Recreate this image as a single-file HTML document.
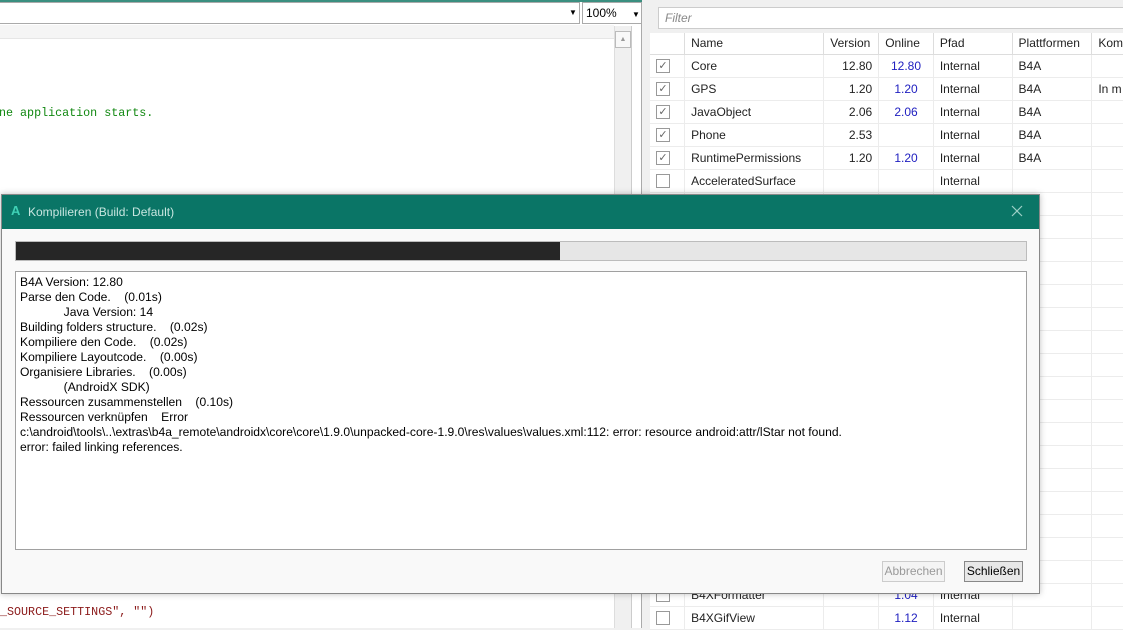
<!DOCTYPE html>
<html><head><meta charset="utf-8"><style>
*{margin:0;padding:0;box-sizing:border-box}
body{width:1123px;height:628px;overflow:hidden;position:relative;background:#f0f0f0;font-family:"Liberation Sans",sans-serif;font-size:12px;color:#000}
.abs{position:absolute}
.ed{left:0;top:0;width:642px;height:628px;background:#fff;border-right:1px solid #aaa}
.mono{font-family:"Liberation Mono",monospace;font-size:11.7px}
table{border-collapse:collapse;position:absolute;left:650px;top:33px;width:480px;background:#fff;font-size:12px}
td{height:23px;border-right:1px solid #ececec;border-bottom:1px solid #ececec;padding:0 6px;white-space:nowrap;color:#222}
th{height:21px;font-weight:normal;text-align:left;padding:0 6px;border-right:1px solid #ddd;border-bottom:1px solid #ddd;background:#fff;color:#222}
.cb{display:inline-block;width:14px;height:14px;border:1px solid #999;vertical-align:middle;text-align:center;line-height:12px;font-size:11px;color:#666}
.r{text-align:right}.b{color:#2020c0;text-align:center}
</style></head><body>
<div class="abs ed">
 <div class="abs" style="left:0;top:0;width:642px;height:2px;background:#3a8f80"></div>
 <div class="abs" style="left:0;top:2px;width:580px;height:22px;border:1px solid #aaa;border-left:none;background:#fff"></div>
 <div class="abs" style="left:569px;top:8px;font-size:8px">▼</div>
 <div class="abs" style="left:582px;top:2px;width:60px;height:22px;border:1px solid #aaa;background:#fff;padding:3px 3px;font-size:12px">100%<span style="position:absolute;left:49px;top:7px;font-size:8px">▼</span></div>
 <div class="abs" style="left:0;top:25px;width:614px;height:14px;background:#f5f5f5;border-bottom:1px solid #e6e6e6"></div>
 <div class="abs" style="left:614px;top:26px;width:18px;height:602px;background:#f0f0f0;border-left:1px solid #ddd;border-right:1px solid #ccc"></div>
 <div class="abs" style="left:615px;top:31px;width:16px;height:17px;border:1px solid #bbb;background:#f8f8f8;font-size:7px;text-align:center;color:#999;line-height:15px">▲</div>
 <div class="abs mono" style="left:-1px;top:106px;color:#118811">ne application starts.</div>
 <div class="abs mono" style="left:0;top:605px;color:#8b1a1a">_SOURCE_SETTINGS", "")</div>
</div>
<div class="abs" style="left:658px;top:7px;width:470px;height:22px;border:1px solid #ccc;background:#fff;padding:3px 6px;color:#888;font-style:italic">Filter</div>
<table>
<tr><th style="width:35px"></th><th style="width:140px">Name</th><th style="width:55px">Version</th><th style="width:55px">Online</th><th style="width:80px">Pfad</th><th style="width:80px">Plattformen</th><th>Kom</th></tr>
<tr><td><span class="cb">✓</span></td><td>Core</td><td class="r">12.80</td><td class="b">12.80</td><td>Internal</td><td>B4A</td><td></td></tr>
<tr><td><span class="cb">✓</span></td><td>GPS</td><td class="r">1.20</td><td class="b">1.20</td><td>Internal</td><td>B4A</td><td>In m</td></tr>
<tr><td><span class="cb">✓</span></td><td>JavaObject</td><td class="r">2.06</td><td class="b">2.06</td><td>Internal</td><td>B4A</td><td></td></tr>
<tr><td><span class="cb">✓</span></td><td>Phone</td><td class="r">2.53</td><td class="b"></td><td>Internal</td><td>B4A</td><td></td></tr>
<tr><td><span class="cb">✓</span></td><td>RuntimePermissions</td><td class="r">1.20</td><td class="b">1.20</td><td>Internal</td><td>B4A</td><td></td></tr>
<tr><td><span class="cb"></span></td><td>AcceleratedSurface</td><td></td><td></td><td>Internal</td><td></td><td></td></tr>
<tr><td></td><td></td><td></td><td></td><td></td><td></td><td></td></tr>
<tr><td></td><td></td><td></td><td></td><td></td><td></td><td></td></tr>
<tr><td></td><td></td><td></td><td></td><td></td><td></td><td></td></tr>
<tr><td></td><td></td><td></td><td></td><td></td><td></td><td></td></tr>
<tr><td></td><td></td><td></td><td></td><td></td><td></td><td></td></tr>
<tr><td></td><td></td><td></td><td></td><td></td><td></td><td></td></tr>
<tr><td></td><td></td><td></td><td></td><td></td><td></td><td></td></tr>
<tr><td></td><td></td><td></td><td></td><td></td><td></td><td></td></tr>
<tr><td></td><td></td><td></td><td></td><td></td><td></td><td></td></tr>
<tr><td></td><td></td><td></td><td></td><td></td><td></td><td></td></tr>
<tr><td></td><td></td><td></td><td></td><td></td><td></td><td></td></tr>
<tr><td></td><td></td><td></td><td></td><td></td><td></td><td></td></tr>
<tr><td></td><td></td><td></td><td></td><td></td><td></td><td></td></tr>
<tr><td></td><td></td><td></td><td></td><td></td><td></td><td></td></tr>
<tr><td></td><td></td><td></td><td></td><td></td><td></td><td></td></tr>
<tr><td></td><td></td><td></td><td></td><td></td><td></td><td></td></tr>
<tr><td></td><td></td><td></td><td></td><td></td><td></td><td></td></tr>
<tr><td><span class="cb"></span></td><td>B4XFormatter</td><td></td><td class="b">1.04</td><td>Internal</td><td></td><td></td></tr>
<tr><td><span class="cb"></span></td><td>B4XGifView</td><td></td><td class="b">1.12</td><td>Internal</td><td></td><td></td></tr>
</table>
<div class="abs" style="left:1px;top:194px;width:1039px;height:400px;background:#f9f9f9;border:1px solid #888;box-shadow:0 0 6px rgba(0,0,0,.25)">
 <div class="abs" style="left:0;top:0;width:1037px;height:34px;background:#0a7566;color:#c8e6e0;font-size:12px;padding:10px 0 0 26px">Kompilieren (Build: Default)
  <span class="abs" style="left:9px;top:8px;color:#3fd0b5;font-weight:bold;font-size:13px">A</span>
  <svg class="abs" style="left:1009px;top:10px" width="12" height="12"><path d="M1 1L11 11M11 1L1 11" stroke="#9ccfc6" stroke-width="1.2"/></svg></div>
 <div class="abs" style="left:13px;top:46px;width:1012px;height:20px;background:#e6e6e6;border:1px solid #bcbcbc"><div style="width:544px;height:18px;background:#262626"></div></div>
 <div class="abs" style="left:13px;top:76px;width:1012px;height:279px;background:#fff;border:1px solid #a0a0a0;padding:3px 4px;font-size:12.1px;line-height:15px;white-space:pre">B4A Version: 12.80
Parse den Code.    (0.01s)
             Java Version: 14
Building folders structure.    (0.02s)
Kompiliere den Code.    (0.02s)
Kompiliere Layoutcode.    (0.00s)
Organisiere Libraries.    (0.00s)
             (AndroidX SDK)
Ressourcen zusammenstellen    (0.10s)
Ressourcen verknüpfen    Error
c:\android\tools\..\extras\b4a_remote\androidx\core\core\1.9.0\unpacked-core-1.9.0\res\values\values.xml:112: error: resource android:attr/lStar not found.
error: failed linking references.</div>
 <div class="abs" style="left:880px;top:366px;width:63px;height:21px;border:1px solid #ccc;background:#f4f4f4;color:#999;text-align:center;line-height:19px">Abbrechen</div>
 <div class="abs" style="left:962px;top:366px;width:59px;height:21px;border:1px solid #888;background:#e8e8e8;text-align:center;line-height:19px">Schließen</div>
</div>
</body></html>
